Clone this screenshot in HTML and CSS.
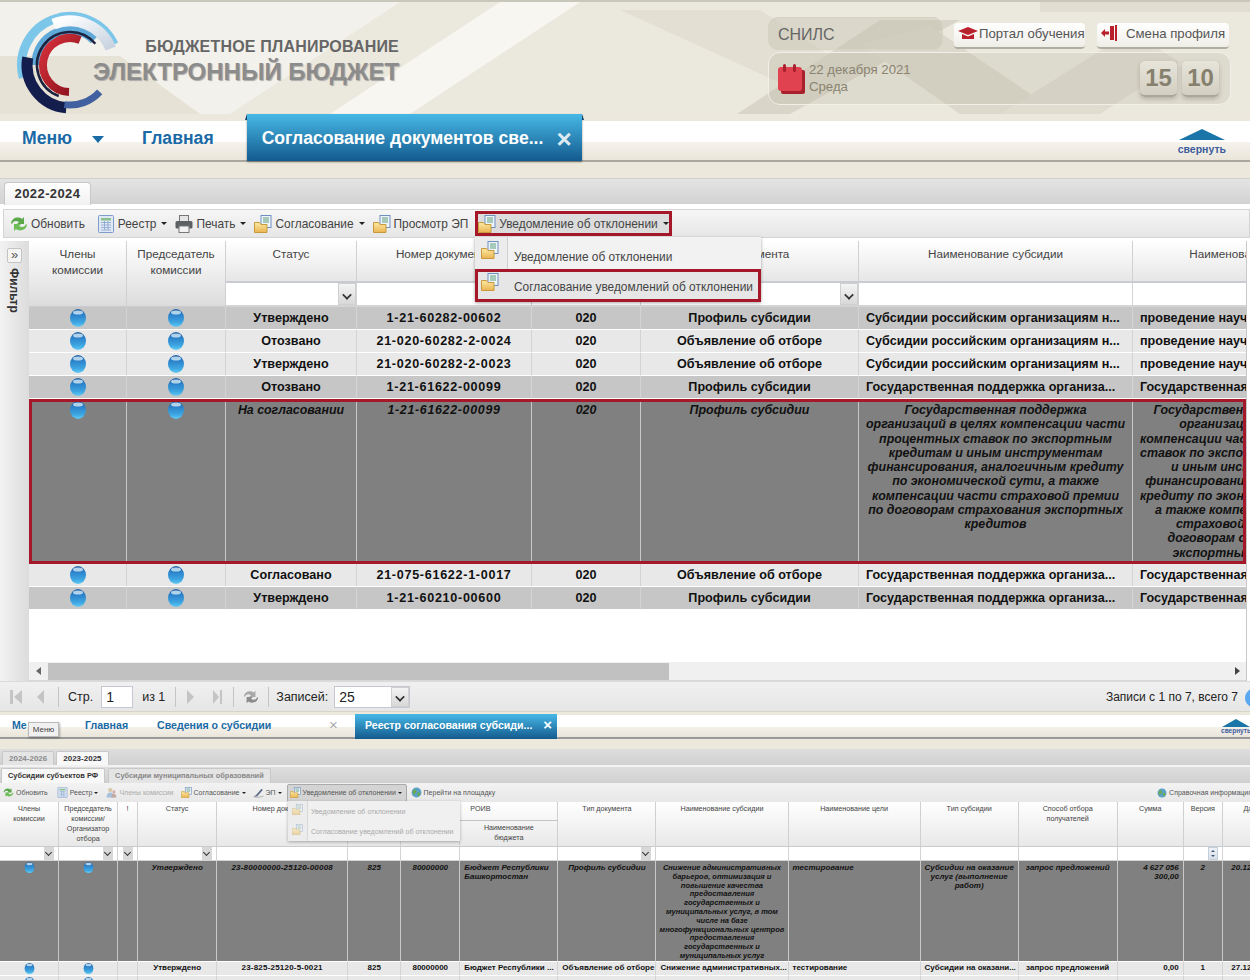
FILE: index.html
```html
<!doctype html>
<html lang="ru">
  <head>
    <meta charset="UTF-8" />
    <title>Электронный бюджет</title>
    <link rel="stylesheet" href="styles.css">
  </head>
  <body>
    <svg class="sprite" width="0" height="0">
      <defs>
        <linearGradient id="ballFill" x1="0" y1="0" x2="0" y2="1">
          <stop offset="0" stop-color="#1d5c9f" />
          <stop offset="0.35" stop-color="#2c84cc" />
          <stop offset="0.75" stop-color="#3ea6e2" />
          <stop offset="1" stop-color="#62cbf3" />
        </linearGradient>
        <linearGradient id="folderFill" x1="0" y1="0" x2="0" y2="1">
          <stop offset="0" stop-color="#fde9a6" />
          <stop offset="1" stop-color="#e9b450" />
        </linearGradient>
        <linearGradient id="redFill" x1="0" y1="0" x2="1" y2="1">
          <stop offset="0" stop-color="#d8323c" />
          <stop offset="1" stop-color="#86101a" />
        </linearGradient>
        <linearGradient id="whiteArc" x1="0" y1="0" x2="1" y2="1">
          <stop offset="0" stop-color="#ffffff" />
          <stop offset="1" stop-color="#c6d2e0" />
        </linearGradient>
        <symbol id="ball" viewBox="0 0 18 18">
          <ellipse cx="9" cy="9" rx="8" ry="9" fill="url(#ballFill)" />
          <ellipse cx="9" cy="3.4" rx="5" ry="2" fill="#dff1fb" opacity="0.75" />
        </symbol>
        <symbol id="docfolder" viewBox="0 0 18 18">
          <rect x="7" y="0.5" width="10" height="12" fill="#eef4fb" stroke="#6f8fbf" />
          <path d="M9 3h6M9 5h6M9 7h6" stroke="#5f9f7a" />
          <path d="M0.5 7.5h5l1.5 2h6v8h-12.500z" fill="url(#folderFill)" stroke="#c79a3c" />
        </symbol>
        <symbol id="refresh" viewBox="0 0 18 18">
          <path d="M1 8c1-5 7-7 11-4l2-2v7h-7l2-2c-3-2-6-1-7 2z" fill="#5aa84a" />
          <path d="M17 10c-1 5-7 7-11 4l-2 2v-7h7l-2 2c3 2 6 1 7-2z" fill="#6cbc58" />
        </symbol>
        <symbol id="refresh-off" viewBox="0 0 18 18">
          <path d="M1 8c1-5 7-7 11-4l2-2v7h-7l2-2c-3-2-6-1-7 2z" fill="#a8a8a8" />
          <path d="M17 10c-1 5-7 7-11 4l-2 2v-7h7l-2 2c3 2 6 1 7-2z" fill="#8c8c8c" />
        </symbol>
        <symbol id="sheet" viewBox="0 0 18 18">
          <rect x="1.500" y="0.500" width="15" height="17" rx="1" fill="#dfe9f6" stroke="#7e9cc8" />
          <rect x="4" y="3" width="10" height="2.500" fill="#8cc08c" />
          <path d="M4 7.500h10M4 10h10M4 12.500h10M4 15h10M7.500 6v9M11 6v9" stroke="#7e9cc8" stroke-width="0.700" fill="none" />
        </symbol>
        <symbol id="printer" viewBox="0 0 18 18">
          <rect x="4.500" y="0.500" width="9" height="6" fill="#e6e6e6" stroke="#777" />
          <rect x="0.500" y="6" width="17" height="7.500" rx="1.500" fill="#5c6064" />
          <rect x="4" y="11" width="10" height="6.500" fill="#f2f2f2" stroke="#777" />
        </symbol>
        <symbol id="globe" viewBox="0 0 18 18">
          <circle cx="9" cy="9" r="8" fill="#5aa0c8" />
          <path d="M4 5c3-2 5 0 5 2s-3 3-4 6c-2-2-3-5-1-8zM11 9c2-1 4 0 4 2s-2 4-3 4-2-4-1-6z" fill="#6cab4c" />
        </symbol>
        <symbol id="people" viewBox="0 0 18 18">
          <circle cx="7" cy="5" r="3.500" fill="#d8c8a8" />
          <path d="M1 17c0-6 3-8 6-8s6 2 6 8z" fill="#a8c0dc" />
          <circle cx="13" cy="8" r="2.500" fill="#d8a8a0" />
          <path d="M9 17c0-4 2-6 4-6s4 2 4 6z" fill="#c0a8a0" />
        </symbol>
        <symbol id="pen" viewBox="0 0 18 18">
          <path d="M1 16l4-3 9-10 2 2-9 10z" fill="#5a6a8a" />
          <path d="M1 16c4 1 10 1 16-1" stroke="#8a8a8a" fill="none" />
        </symbol>
      </defs>
    </svg>

    <div class="screen screen-top">
      <header class="head">
        <svg class="head-bg" width="1250" height="112" viewBox="0 0 1250 112">
          <rect width="1250" height="112" fill="#ebe8de" />
          <path d="M0 0H400L230 112H0z" fill="#f3f1eb" />
          <path d="M0 54H120L200 112H0z" fill="#e6e2d5" />
          <path d="M330 112L500 0H580L410 112z" fill="#f7f6f1" />
          <path d="M620 8H760L840 60 800 90z" fill="#e3e0d3" />
          <path d="M737 112L880 18 960 18 790 112z" fill="#d9d5c8" />
          <path d="M860 42L960 112H1060L930 24z" fill="#dcd8cb" />
          <path d="M1000 112L1130 30 1180 60 1100 112z" fill="#e0dcd0" />
          <path d="M1040 0H1250V10H1040z" fill="#e1ded1" />
        </svg>
        <div class="brand">
          <svg class="logo" width="115" height="108" viewBox="0 0 115 108">
            <path d="M11.200 67.600A48.500 48.500 0 0 1 102 34.500" fill="none" stroke="#7cc6ea" stroke-width="9" />
            <path d="M24 55A34 34 0 0 1 82 30" fill="none" stroke="#5fa9d8" stroke-width="9" />
            <path d="M41.500 14.200A44 44 0 0 1 98.800 38.500" fill="none" stroke="url(#whiteArc)" stroke-width="11" />
            <path d="M15.700 47.500A43 43 0 0 0 54.300 97.800" fill="none" stroke="#141e4e" stroke-width="11" />
            <path d="M52.400 94.600A40 40 0 0 0 87.700 81.800" fill="none" stroke="#41609f" stroke-width="7" />
            <path d="M83.300 33.800A33 33 0 1 0 46.700 86" fill="none" stroke="#1b2340" stroke-width="2.500" />
            <path d="M68.100 30A27 27 0 1 0 57 82" fill="none" stroke="url(#redFill)" stroke-width="8" />
          </svg>
          <div class="brand-text">
            <div class="brand-small">БЮДЖЕТНОЕ ПЛАНИРОВАНИЕ</div>
            <div class="brand-big">ЭЛЕКТРОННЫЙ БЮДЖЕТ</div>
          </div>
        </div>
        <div class="user">
          <div class="user-top">
            <div class="snils">СНИЛС</div>
            <div class="user-btn btn-portal">
              <svg width="22" height="14" viewBox="0 0 22 14"><path d="M11 1L21 5 11 9 1 5z" fill="#b8202c" /><path d="M5 8v5h12V8l-6 2.500z" fill="#b8202c" /></svg>
              Портал обучения
            </div>
            <div class="user-btn btn-profile">
              <svg width="16" height="16" viewBox="0 0 16 16"><path d="M9 1h4v14H9zM14 0h2v16h-2z" fill="#b8202c" /><path d="M0 8l4-4v2.500h4v3H4V12z" fill="#b8202c" /></svg>
              Смена профиля
            </div>
          </div>
          <div class="datebox">
            <svg class="cal" width="28" height="30" viewBox="0 0 28 30">
              <rect x="4" y="6" width="24" height="24" rx="2" fill="#a8202c" />
              <rect x="1" y="3" width="24" height="24" rx="3" fill="#e0434f" />
              <rect x="6" y="0" width="3" height="8" rx="1.500" fill="#a8202c" />
              <rect x="16" y="0" width="3" height="8" rx="1.500" fill="#a8202c" />
            </svg>
            <div class="date-text">
              <div>22 декабря 2021</div>
              <div>Среда</div>
            </div>
            <div class="clock">
              <span class="digit">15</span>
              <span class="digit">10</span>
            </div>
          </div>
        </div>
      </header>

      <nav class="nav">
        <span class="nav-link">Меню</span>
        <span class="nav-caret"></span>
        <span class="nav-link nav-main">Главная</span>
        <div class="nav-tab">
          <span>Согласование документов све...</span>
          <span class="tab-x">×</span>
        </div>
        <div class="collapse">
          <span class="collapse-tri"></span>
          <span>свернуть</span>
        </div>
      </nav>
      <div class="strip"></div>

      <div class="tabbar">
        <div class="year-tab">2022-2024</div>
      </div>

      <div class="toolbar">
        <div class="tool t-refresh"><svg width="18" height="18"><use href="#refresh" /></svg>Обновить</div>
        <div class="tool t-reg"><svg width="18" height="18"><use href="#sheet" /></svg>Реестр<i class="caret"></i></div>
        <div class="tool t-next"><svg width="18" height="18"><use href="#printer" /></svg>Печать<i class="caret"></i></div>
        <div class="tool t-next"><svg width="18" height="18"><use href="#docfolder" /></svg>Согласование<i class="caret"></i></div>
        <div class="tool t-next"><svg width="18" height="18"><use href="#docfolder" /></svg>Просмотр ЭП</div>
        <div class="tool tool-marked"><svg width="18" height="18"><use href="#docfolder" /></svg>Уведомление об отклонении<i class="caret"></i></div>
      </div>

      <div class="menu">
        <div class="menu-item"><svg width="18" height="18"><use href="#docfolder" /></svg><span>Уведомление об отклонении</span></div>
        <div class="menu-item menu-marked"><svg width="18" height="18"><use href="#docfolder" /></svg><span>Согласование уведомлений об отклонении</span></div>
      </div>

      <div class="work">
        <aside class="side">
          <div class="side-btn">»</div>
          <div class="side-label">Фильтр</div>
        </aside>
        <div class="work-main">
          <div class="grid">
            <table class="table table-top">
              <colgroup>
                <col class="c98" /><col class="c99" /><col class="c131" /><col class="c175" />
                <col class="c109" /><col class="c218" /><col class="c274" /><col class="c224" />
              </colgroup>
              <thead>
                <tr class="head-row">
                  <th rowspan="2" class="th-tall">Члены<br />комиссии</th>
                  <th rowspan="2" class="th-tall">Председатель<br />комиссии</th>
                  <th>Статус</th>
                  <th>Номер документа</th>
                  <th></th>
                  <th>Тип документа</th>
                  <th>Наименование субсидии</th>
                  <th>Наименование цели</th>
                </tr>
                <tr class="filter-row">
                  <td class="has-trigger"><i class="trigger"></i></td>
                  <td></td>
                  <td></td>
                  <td class="has-trigger"><i class="trigger"></i></td>
                  <td></td>
                  <td></td>
                </tr>
              </thead>
              <tbody>
                <tr class="r-grey">
                  <td><svg class="ball"><use href="#ball" /></svg></td><td><svg class="ball"><use href="#ball" /></svg></td>
                  <td>Утверждено</td><td class="num">1-21-60282-00602</td><td>020</td><td>Профиль субсидии</td>
                  <td class="left">Субсидии российским организациям н...</td><td class="left">проведение научно-исследовательских</td>
                </tr>
                <tr class="r-light">
                  <td><svg class="ball"><use href="#ball" /></svg></td><td><svg class="ball"><use href="#ball" /></svg></td>
                  <td>Отозвано</td><td class="num">21-020-60282-2-0024</td><td>020</td><td>Объявление об отборе</td>
                  <td class="left">Субсидии российским организациям н...</td><td class="left">проведение научно-исследовательских</td>
                </tr>
                <tr class="r-light">
                  <td><svg class="ball"><use href="#ball" /></svg></td><td><svg class="ball"><use href="#ball" /></svg></td>
                  <td>Утверждено</td><td class="num">21-020-60282-2-0023</td><td>020</td><td>Объявление об отборе</td>
                  <td class="left">Субсидии российским организациям н...</td><td class="left">проведение научно-исследовательских</td>
                </tr>
                <tr class="r-grey">
                  <td><svg class="ball"><use href="#ball" /></svg></td><td><svg class="ball"><use href="#ball" /></svg></td>
                  <td>Отозвано</td><td class="num">1-21-61622-00099</td><td>020</td><td>Профиль субсидии</td>
                  <td class="left">Государственная поддержка организа...</td><td class="left">Государственная поддержка</td>
                </tr>
                <tr class="r-sel r-sel-top">
                  <td><svg class="ball"><use href="#ball" /></svg></td><td><svg class="ball"><use href="#ball" /></svg></td>
                  <td>На согласовании</td><td class="num">1-21-61622-00099</td><td>020</td><td>Профиль субсидии</td>
                  <td>Государственная поддержка<br />организаций в целях компенсации части<br />процентных ставок по экспортным<br />кредитам и иным инструментам<br />финансирования, аналогичным кредиту<br />по экономической сути, а также<br />компенсации части страховой премии<br />по договорам страхования экспортных<br />кредитов</td>
                  <td>Государственная поддержка<br />организаций в целях<br />компенсации части процентных<br />ставок по экспортным кредитам<br />и иным инструментам<br />финансирования, аналогичным<br />кредиту по экономической сути,<br />а также компенсации части<br />страховой премии по<br />договорам страхования<br />экспортных кредитов</td>
                </tr>
                <tr class="r-light">
                  <td><svg class="ball"><use href="#ball" /></svg></td><td><svg class="ball"><use href="#ball" /></svg></td>
                  <td>Согласовано</td><td class="num">21-075-61622-1-0017</td><td>020</td><td>Объявление об отборе</td>
                  <td class="left">Государственная поддержка организа...</td><td class="left">Государственная поддержка</td>
                </tr>
                <tr class="r-grey">
                  <td><svg class="ball"><use href="#ball" /></svg></td><td><svg class="ball"><use href="#ball" /></svg></td>
                  <td>Утверждено</td><td class="num">1-21-60210-00600</td><td>020</td><td>Профиль субсидии</td>
                  <td class="left">Государственная поддержка организа...</td><td class="left">Государственная поддержка</td>
                </tr>
              </tbody>
            </table>
            <div class="row-mark"></div>
          </div>
          <div class="scrollbar">
            <i class="arrow-l"></i>
            <div class="thumb"></div>
            <i class="arrow-r"></i>
          </div>
        </div>
      </div>

      <div class="pager">
        <svg class="pg-icon" width="14" height="16" viewBox="0 0 14 16"><path d="M1 1h3v14H1zM13 1v14L5 8z" fill="#c4c4c4" /></svg>
        <svg class="pg-icon pg-prev" width="9" height="16" viewBox="0 0 9 16"><path d="M8 1v14L1 8z" fill="#c4c4c4" /></svg>
        <i class="pg-sep pg-sep-first"></i>
        <span class="pg-text">Стр.</span>
        <span class="pg-input">1</span>
        <span class="pg-text">из 1</span>
        <i class="pg-sep"></i>
        <svg class="pg-icon pg-next" width="9" height="16" viewBox="0 0 9 16"><path d="M1 1v14l7-7z" fill="#c4c4c4" /></svg>
        <svg class="pg-icon pg-last" width="11" height="16" viewBox="0 0 11 16"><path d="M1 1v14l6-7zM8 1h2v14H8z" fill="#c4c4c4" /></svg>
        <i class="pg-sep"></i>
        <svg class="pg-icon" width="16" height="18"><use href="#refresh-off" /></svg>
        <i class="pg-sep pg-sep-tight"></i>
        <span class="pg-text">Записей:</span>
        <span class="pg-combo"><span class="pg-val">25</span><i class="trigger"></i></span>
        <span class="pg-total">Записи с 1 по 7, всего 7</span>
        <i class="pg-dot"></i>
      </div>
    </div>

    <div class="screen screen-bottom">
      <div class="nav2-top"></div>
      <nav class="nav2">
        <span class="nav2-link n-menu">Ме</span>
        <span class="nav2-link n-main">Главная</span>
        <span class="nav2-link n-info">Сведения о субсидии</span>
        <span class="n-x">×</span>
        <div class="nav2-tab">
          <span>Реестр согласования субсиди...</span>
          <span class="tab2-x">×</span>
        </div>
        <div class="collapse2">
          <span class="collapse2-tri"></span>
          <span>свернуть</span>
        </div>
      </nav>
      <div class="tip">Меню</div>
      <div class="strip2"></div>

      <div class="tabs2 tabs-years">
        <div class="tab2">2024-2026</div>
        <div class="tab2 tab2-on">2023-2025</div>
      </div>
      <div class="tabs2 tabs-kinds">
        <div class="tab2 tab2-on">Субсидии субъектов РФ</div>
        <div class="tab2">Субсидии муниципальных образований</div>
      </div>

      <div class="toolbar2">
        <div class="tool2"><svg width="11" height="11"><use href="#refresh" /></svg>Обновить</div>
        <div class="tool2 m-reg"><svg width="11" height="11"><use href="#sheet" /></svg>Реестр<i class="caret2"></i></div>
        <div class="tool2 tool2-off m-mem"><svg width="11" height="11"><use href="#people" /></svg>Члены комиссии</div>
        <div class="tool2 m-agree"><svg width="11" height="11"><use href="#docfolder" /></svg>Согласование<i class="caret2"></i></div>
        <div class="tool2 m-ep"><svg width="11" height="11"><use href="#pen" /></svg>ЭП<i class="caret2"></i></div>
        <div class="tool2 tool2-open"><svg width="11" height="11"><use href="#docfolder" /></svg>Уведомление об отклонении<i class="caret2"></i></div>
        <div class="tool2 m-go"><svg width="11" height="11"><use href="#globe" /></svg>Перейти на площадку</div>
        <div class="tool2 tool2-right"><svg width="10" height="10"><use href="#globe" /></svg>Справочная информация</div>
      </div>

      <div class="menu2">
        <div class="menu2-item"><svg width="11" height="11"><use href="#docfolder" /></svg><span>Уведомление об отклонении</span></div>
        <div class="menu2-item"><svg width="11" height="11"><use href="#docfolder" /></svg><span>Согласование уведомлений об отклонении</span></div>
      </div>

      <table class="table table-bottom">
        <colgroup>
          <col class="b59" /><col class="b59" /><col class="b20" /><col class="b79" /><col class="b131" /><col class="b53" />
          <col class="b59" /><col class="b98" /><col class="b98" /><col class="b132" /><col class="b132" /><col class="b98" />
          <col class="b99" /><col class="b66" /><col class="b39" /><col class="b58" />
        </colgroup>
        <thead>
          <tr class="head2-row">
            <th>Члены<br />комиссии</th>
            <th>Председатель<br />комиссии/<br />Организатор<br />отбора</th>
            <th>!</th>
            <th>Статус</th>
            <th>Номер документа</th>
            <th></th>
            <th></th>
            <th class="th-split"><div class="th-up">РОИВ</div><div class="th-down">Наименование<br />бюджета</div></th>
            <th>Тип документа</th>
            <th>Наименование субсидии</th>
            <th>Наименование цели</th>
            <th>Тип субсидии</th>
            <th>Способ отбора<br />получателей</th>
            <th>Сумма</th>
            <th>Версия</th>
            <th>Дата</th>
          </tr>
          <tr class="filter2-row">
            <td class="has-trigger"><i class="trigger2"></i></td>
            <td class="has-trigger"><i class="trigger2"></i></td>
            <td class="has-trigger"><i class="trigger2"></i></td>
            <td class="has-trigger"><i class="trigger2"></i></td>
            <td></td><td></td><td></td><td></td>
            <td class="has-trigger"><i class="trigger2"></i></td>
            <td></td><td></td><td></td><td></td><td></td>
            <td class="has-trigger"><i class="spin"></i></td>
            <td></td>
          </tr>
        </thead>
        <tbody>
          <tr class="r-sel r2-sel">
            <td><svg class="ball2"><use href="#ball" /></svg></td><td><svg class="ball2"><use href="#ball" /></svg></td><td></td>
            <td>Утверждено</td><td class="num2">23-80000000-25120-00008</td><td>825</td><td>80000000</td>
            <td class="left">Бюджет Республики<br />Башкортостан</td>
            <td>Профиль субсидии</td>
            <td class="long">Снижение административных<br />барьеров, оптимизация и<br />повышение качества<br />предоставления<br />государственных и<br />муниципальных услуг, в том<br />числе на базе<br />многофункциональных центров<br />предоставления<br />государственных и<br />муниципальных услуг</td>
            <td class="left">тестирование</td>
            <td>Субсидии на оказание<br />услуг (выполнение<br />работ)</td>
            <td>запрос предложений</td>
            <td class="right">4 627 056<br />300,00</td>
            <td>2</td>
            <td>20.12.2022</td>
          </tr>
          <tr class="r2-light">
            <td><svg class="ball2"><use href="#ball" /></svg></td><td><svg class="ball2"><use href="#ball" /></svg></td><td></td>
            <td>Утверждено</td><td class="num2">23-825-25120-5-0021</td><td>825</td><td>80000000</td>
            <td class="left">Бюджет Республики ...</td>
            <td>Объявление об отборе</td>
            <td class="left">Снижение административных...</td>
            <td class="left">тестирование</td>
            <td class="left">Субсидии на оказани...</td>
            <td>запрос предложений</td>
            <td class="right">0,00</td>
            <td>1</td>
            <td>27.12.2022</td>
          </tr>
          <tr class="r2-light">
            <td><svg class="ball2"><use href="#ball" /></svg></td><td><svg class="ball2"><use href="#ball" /></svg></td><td></td>
            <td></td><td></td><td></td><td></td><td></td><td></td><td></td><td></td><td></td><td></td><td></td><td></td><td></td>
          </tr>
        </tbody>
      </table>
    </div>
  </body>
</html>
```

FILE: styles.css
```css
* {
  box-sizing: border-box;
}

html,
body {
  margin: 0;
  padding: 0;
}

body {
  width: 1250px;
  height: 980px;
  overflow: hidden;
  font-family: "Liberation Sans", Arial, sans-serif;
  background: #fff;
}

.sprite {
  position: absolute;
}

.screen {
  position: relative;
  overflow: hidden;
}

.screen-top {
  height: 712px;
}

.screen-bottom {
  height: 268px;
}

/* шапка */
.head {
  position: relative;
  height: 121px;
  border-top: 2px solid #c9c7bc;
  background: #ece8dd;
  display: flex;
  justify-content: space-between;
}

.head-bg {
  position: absolute;
  left: 0;
  top: 0;
}

.brand {
  position: relative;
  display: flex;
  padding: 8px 0 0 12px;
}

.brand-text {
  margin-left: -34px;
  padding-top: 27px;
  text-align: right;
  width: 306px;
  font-weight: bold;
  white-space: nowrap;
}

.brand-small {
  font-size: 16px;
  line-height: 20px;
  letter-spacing: 0.2px;
  color: #666;
}

.brand-big {
  font-size: 24px;
  line-height: 30px;
  color: #8c8c8c;
  text-shadow: 1px 1px 1px #aaa;
}

.user {
  position: relative;
  width: 463px;
  margin-right: 19px;
  padding-top: 15px;
}

.user-top {
  display: flex;
  align-items: flex-start;
  height: 35px;
}

.snils {
  width: 175px;
  height: 33px;
  padding: 8px 9px;
  font-size: 16px;
  line-height: 18px;
  color: #666;
  background: rgba(190, 186, 170, 0.35);
  border: 1px solid #d6d2c4;
  border-radius: 10px;
}

.user-btn {
  display: flex;
  align-items: center;
  height: 26px;
  margin-top: 6px;
  padding-bottom: 4px;
  font-size: 13.200px;
  color: #555;
  white-space: nowrap;
  background: linear-gradient(#fff, #f0eee8);
  border-bottom: 2px solid #b0aea2;
  border-radius: 4px;
}

.user-btn svg {
  flex: none;
}

.btn-portal {
  width: 131px;
  margin-left: 11px;
  padding-left: 3px;
}

.btn-profile {
  width: 132px;
  margin-left: 12px;
  padding-left: 4px;
  gap: 9px;
}

.datebox {
  display: flex;
  align-items: flex-start;
  height: 53px;
  padding: 8px 10px 0 8px;
  background: rgba(190, 186, 170, 0.3);
  border: 1px solid #f1efe8;
  border-radius: 12px;
}

.date-text {
  margin-left: 4px;
  font-size: 13.200px;
  line-height: 17px;
  color: #8a8470;
}

.cal {
  flex: none;
  margin-top: 3px;
}

.clock {
  margin-left: auto;
  display: flex;
  gap: 5px;
  margin-right: 1px;
}

.digit {
  width: 37px;
  height: 36px;
  font-size: 24px;
  line-height: 34px;
  font-weight: bold;
  text-align: center;
  color: #86816f;
  background: linear-gradient(#e7e4da, #d3cfc2);
  border-bottom: 2px solid #aaa797;
  border-radius: 5px;
  box-shadow: 0 2px 4px rgba(120, 116, 100, 0.4);
}

/* меню вкладок */
.nav {
  display: flex;
  height: 41px;
  padding-left: 22px;
  font-size: 17.600px;
  font-weight: bold;
  background: linear-gradient(#fff 0 21px, #f6f3ed 21px, #e9e5da 39px, #a9a79e 39px 41px);
}

.nav-link {
  padding-top: 8px;
  line-height: 18px;
  color: #1a6aa6;
}

.nav-caret {
  width: 0;
  height: 0;
  margin: 15px 0 0 20px;
  border-left: 6px solid transparent;
  border-right: 6px solid transparent;
  border-top: 7px solid #1a6aa6;
}

.nav-main {
  margin-left: 38px;
}

.nav-tab {
  position: relative;
  display: flex;
  justify-content: space-between;
  width: 335px;
  height: 47px;
  margin: -7px 0 0 33px;
  padding: 15px 10px 0 15px;
  line-height: 18px;
  color: #fff;
  background: linear-gradient(#46b8e6, #145a8e);
  box-shadow: 0 1px 2px rgba(0, 0, 0, 0.4);
}

.nav-tab::before,
.nav-tab::after {
  content: "";
  position: absolute;
  top: 0;
  border-bottom: 6px solid #14406a;
}

.nav-tab::before {
  left: -2px;
  border-left: 2px solid transparent;
}

.nav-tab::after {
  right: -2px;
  border-right: 2px solid transparent;
}

.tab-x {
  font-size: 26px;
  color: #dfeaf3;
  line-height: 20px;
}

.collapse {
  margin-left: auto;
  margin-right: 24px;
  padding-top: 8px;
  display: flex;
  flex-direction: column;
  align-items: center;
  font-size: 10.500px;
  line-height: 12px;
  color: #3c5c9c;
}

.collapse-tri {
  width: 0;
  height: 0;
  margin-bottom: 3px;
  border-left: 23px solid transparent;
  border-right: 23px solid transparent;
  border-bottom: 11px solid #1a75a8;
}

.strip {
  height: 16px;
  background: #ece8dc;
}

/* вкладки периодов */
.tabbar {
  height: 26px;
  padding: 3px 0 0 4px;
  background: linear-gradient(#e4e4e4, #d2d2d2);
  border-top: 1px solid #d0d0d0;
}

.year-tab {
  width: 87px;
  height: 23px;
  font-size: 13px;
  font-weight: bold;
  line-height: 22px;
  letter-spacing: 0.4px;
  text-align: center;
  color: #333;
  background: linear-gradient(#fff, #f0f0f0);
  border: 1px solid #c8c8c8;
  border-bottom: none;
  border-radius: 4px 4px 0 0;
}

.toolbar {
  display: flex;
  align-items: center;
  height: 29px;
  margin: 5px 0 3px 3px;
  padding-left: 6px;
  font-size: 11.900px;
  color: #444;
  background: linear-gradient(#f6f6f6, #e6e6e6);
  border: 1px solid #d4d4d4;
}

.tool {
  display: flex;
  align-items: center;
  gap: 3px;
  white-space: nowrap;
}

.t-reg {
  margin-left: 12px;
}

.t-next {
  margin-left: 8px;
}

.tool-marked {
  height: 25px;
  margin-left: 7px;
  background: #dcdcdc;
  border: 3px solid #a5182a;
}

.caret {
  width: 0;
  height: 0;
  margin-left: 2px;
  border-left: 3px solid transparent;
  border-right: 3px solid transparent;
  border-top: 3px solid #222;
}

.menu {
  position: absolute;
  left: 475px;
  top: 237px;
  width: 286px;
  height: 65px;
  z-index: 5;
  font-size: 11.900px;
  color: #444;
  background: linear-gradient(90deg, #ececec 0 32px, #d0d0d0 32px 33px, #f2f2f2 33px);
  box-shadow: 0 1px 3px rgba(0, 0, 0, 0.35);
}

.menu-item {
  position: relative;
  display: flex;
  height: 32px;
  padding: 4px 0 0 6px;
}

.menu-item span {
  margin: 9px 0 0 15px;
  white-space: nowrap;
}

.menu-marked {
  height: 33px;
  padding: 1px 0 0 3px;
  border: 3px solid #a5182a;
  background: #e6e6e6;
}

.menu-marked span {
  margin: 7px 0 0 15px;
}

/* таблица */
.work {
  display: flex;
  height: 440px;
}

.side {
  flex: none;
  width: 29px;
  padding: 7px 0 0 7px;
  background: linear-gradient(90deg, #f2f2f2, #dcdcdc);
}

.side-btn {
  width: 15px;
  height: 15px;
  font-size: 13px;
  line-height: 12px;
  text-align: center;
  color: #555;
  background: #f6f6f6;
  border: 1px solid #c4c4c4;
  border-radius: 2px;
}

.side-label {
  margin-top: 5px;
  writing-mode: vertical-rl;
  font-size: 12px;
  font-weight: bold;
  color: #333;
}

.work-main {
  flex: none;
  width: 1218px;
  border-right: 1px solid #c8c8c8;
}

.grid {
  position: relative;
  height: 421px;
  overflow: hidden;
}

.table {
  table-layout: fixed;
  border-collapse: separate;
  border-spacing: 0;
  color: #111;
}

.table-top {
  width: 1328px;
  font-size: 12.600px;
  font-weight: bold;
}

.c98 { width: 98px; }
.c99 { width: 99px; }
.c131 { width: 131px; }
.c175 { width: 175px; }
.c109 { width: 109px; }
.c218 { width: 218px; }
.c274 { width: 274px; }
.c224 { width: 224px; }

.table th {
  font-weight: normal;
  vertical-align: top;
  color: #444;
  border-right: 1px solid #d0d0d0;
}

.table td {
  padding: 0 7px;
  text-align: center;
  white-space: nowrap;
  overflow: hidden;
  border-right: 1px solid #d4d4d4;
  border-bottom: 1px solid #fff;
}

.table td.left {
  text-align: left;
}

.table td.right {
  text-align: right;
}

.table td.num {
  letter-spacing: 0.7px;
}

.table td.num2 {
  letter-spacing: 0.2px;
}

.head-row th {
  height: 42px;
  padding: 5px 0 0;
  font-size: 11.700px;
  line-height: 16px;
  background: linear-gradient(#fff, #e6e6e6);
  border-bottom: 2px solid #c8ccd0;
}

.head-row .th-tall {
  background: linear-gradient(#fff, #dcdcdc);
  border-bottom: 1px solid #c8ccd0;
}

.filter-row td {
  position: relative;
  height: 24px;
  padding: 0;
  background: #fff;
  border-bottom: 2px solid #d4d4d4;
}

.trigger {
  display: block;
  width: 18px;
  height: 22px;
  background: linear-gradient(#f4f4f4, #d8d8d8);
  border: 1px solid #d0d0d0;
  position: relative;
}

.trigger::after {
  content: "";
  position: absolute;
  left: 4px;
  top: 7px;
  width: 6px;
  height: 6px;
  border-right: 2px solid #333;
  border-bottom: 2px solid #333;
  transform: rotate(45deg) scale(0.85);
}

.has-trigger .trigger {
  margin-left: auto;
}

.r-grey td {
  height: 23px;
  background: #c6c6c6;
}

.r-light td {
  height: 23px;
  background: #e8e8e8;
}

.r-sel td {
  background: #808080;
  font-style: italic;
  vertical-align: top;
  border-right-color: #c8c8c8;
}

.r-sel-top td {
  height: 165px;
  padding-top: 4px;
  font-size: 12.400px;
  line-height: 14.250px;
}

.ball {
  display: block;
  width: 18px;
  height: 18px;
  margin: 0 auto;
}

.r-sel-top .ball {
  margin-top: -2px;
}

.row-mark {
  position: absolute;
  left: 0;
  top: 158px;
  width: 1217px;
  height: 165px;
  border: 3px solid #a5182a;
}

.scrollbar {
  display: flex;
  align-items: center;
  height: 19px;
  padding: 0 6px 0 7px;
  background: #f0f0f0;
  border-bottom: 1px solid #d8d8d8;
}

.arrow-l {
  width: 0;
  height: 0;
  border-top: 4px solid transparent;
  border-bottom: 4px solid transparent;
  border-right: 5px solid #666;
}

.thumb {
  width: 621px;
  height: 17px;
  margin-left: 7px;
  background: #c1c1c1;
}

.arrow-r {
  width: 0;
  height: 0;
  margin-left: auto;
  border-top: 4px solid transparent;
  border-bottom: 4px solid transparent;
  border-left: 5px solid #444;
}

/* пейджер */
.pager {
  position: relative;
  display: flex;
  align-items: center;
  height: 31px;
  padding-left: 9px;
  font-size: 12.500px;
  color: #222;
  background: linear-gradient(#f0f0f0, #e6e6e6);
  border-top: 1px solid #dadada;
  border-bottom: 1px solid #d8d4c8;
}

.pg-icon {
  flex: none;
}

.pg-prev {
  margin-left: 13px;
}

.pg-next {
  margin-left: 1px;
}

.pg-last {
  margin-left: 17px;
}

.pg-sep {
  width: 1px;
  height: 20px;
  margin: 0 9px 0 10px;
  background: #c4c4c4;
}

.pg-sep-first {
  margin-left: 13px;
}

.pg-sep-tight {
  margin: 0 7px 0 9px;
}

.pg-text {
  white-space: nowrap;
}

.pg-input {
  width: 32px;
  height: 22px;
  margin: 0 9px 0 8px;
  padding-left: 4px;
  font-size: 14px;
  line-height: 20px;
  background: #fff;
  border: 1px solid #c4c8d0;
}

.pg-combo {
  display: flex;
  width: 76px;
  height: 22px;
  margin-left: 6px;
  font-size: 14px;
  line-height: 20px;
  background: #fff;
  border: 1px solid #c4c8d0;
}

.pg-val {
  flex: 1;
  padding-left: 4px;
}

.pg-combo .trigger {
  height: 20px;
}

.pg-combo .trigger::after {
  top: 5px;
}

.pg-total {
  margin-left: auto;
  margin-right: 12px;
  font-size: 12px;
}

.pg-dot {
  position: absolute;
  right: -17px;
  top: 6px;
  width: 22px;
  height: 20px;
  border-radius: 50%;
  background: #5aa8f0;
}

/* нижний экран */
.nav2-top {
  height: 3px;
  background: #ece8dc;
}

.nav2 {
  display: flex;
  height: 24px;
  font-size: 10.600px;
  font-weight: bold;
  background: linear-gradient(#fff 0 12px, #f4f1ea 12px, #e9e5da 22px, #999 22px 24px);
}

.nav2-link {
  padding-top: 4px;
  line-height: 12px;
  color: #1a6aa6;
}

.n-menu {
  margin-left: 12px;
  width: 73px;
}

.n-main {
  width: 72px;
}

.n-info {
  width: 172px;
}

.n-x {
  width: 26px;
  color: #aaa;
  font-size: 15px;
  line-height: 20px;
  font-weight: normal;
}

.nav2-tab {
  display: flex;
  justify-content: space-between;
  width: 202px;
  height: 25px;
  margin-top: -1px;
  padding: 5px 5px 0 10px;
  font-size: 10.600px;
  line-height: 12px;
  white-space: nowrap;
  color: #fff;
  background: linear-gradient(#46b8e6, #145a8e);
}

.tab2-x {
  font-size: 15px;
}

.collapse2 {
  margin-left: auto;
  display: flex;
  flex-direction: column;
  align-items: center;
  width: 28px;
  padding-top: 4px;
  font-size: 6.500px;
  line-height: 8px;
  white-space: nowrap;
  color: #3c5c9c;
}

.collapse2-tri {
  width: 0;
  height: 0;
  border-left: 14px solid transparent;
  border-right: 14px solid transparent;
  border-bottom: 8px solid #1a75a8;
}

.tip {
  position: absolute;
  left: 28px;
  top: 10px;
  width: 31px;
  height: 15px;
  font-size: 8px;
  line-height: 14px;
  text-align: center;
  color: #444;
  background: #f0f0f0;
  border: 1px solid #bbb;
  box-shadow: 1px 1px 2px rgba(0, 0, 0, 0.3);
}

.strip2 {
  height: 10px;
  background: #ece8dc;
}

.tabs2 {
  display: flex;
  padding-left: 2px;
  background: linear-gradient(#dedede, #d0d0d0);
  font-weight: bold;
  color: #888;
}

.tabs-years {
  gap: 2px;
  height: 18px;
  padding-top: 2px;
  font-size: 8px;
  border-bottom: 2px solid #f2f2f2;
}

.tabs-kinds {
  gap: 3px;
  height: 16px;
  padding-left: 1px;
  padding-top: 1px;
  font-size: 7.400px;
}

.tab2 {
  padding: 0 6px;
  line-height: 14px;
  background: #e4e4e4;
  border: 1px solid #c8c8c8;
  border-bottom: none;
  border-radius: 2px 2px 0 0;
}

.tab2-on {
  color: #333;
  background: #f8f8f8;
}

.toolbar2 {
  position: relative;
  display: flex;
  align-items: center;
  height: 19px;
  padding-left: 3px;
  font-size: 7px;
  color: #555;
  background: linear-gradient(#f2f2f2, #e8e8e8);
}

.tool2 {
  display: flex;
  align-items: center;
  gap: 2px;
  white-space: nowrap;
}

.tool2-off {
  color: #aaa;
}

.m-reg {
  margin-left: 9px;
}

.m-mem {
  margin-left: 8px;
}

.m-agree {
  margin-left: 7px;
}

.m-ep {
  margin-left: 7px;
}

.tool2-open {
  width: 120px;
  height: 18px;
  margin-left: 5px;
  padding: 0 2px;
  background: #d4d4d4;
  border: 1px solid #aaa;
  border-radius: 2px;
}

.m-go {
  margin-left: 4px;
}

.tool2-right {
  margin-left: auto;
  margin-right: -2px;
}

.caret2 {
  width: 0;
  height: 0;
  border-left: 2px solid transparent;
  border-right: 2px solid transparent;
  border-top: 2px solid #222;
}

.menu2 {
  position: absolute;
  left: 288px;
  top: 89px;
  width: 172px;
  height: 40px;
  z-index: 5;
  font-size: 7.100px;
  color: #aaa;
  background: linear-gradient(90deg, #ececec 0 19px, #d8d8d8 19px 20px, #f0f0f0 20px);
  box-shadow: 0 1px 3px rgba(0, 0, 0, 0.3);
}

.menu2-item {
  display: flex;
  height: 20px;
  padding: 3px 0 0 4px;
}

.menu2-item svg {
  opacity: 0.5;
}

.menu2-item span {
  margin: 4px 0 0 8px;
  white-space: nowrap;
}

.table-bottom {
  width: 1281px;
  font-size: 8px;
  font-weight: bold;
}

.b20 { width: 20px; }
.b39 { width: 39px; }
.b53 { width: 53px; }
.b58 { width: 58px; }
.b59 { width: 59px; }
.b66 { width: 66px; }
.b79 { width: 79px; }
.b98 { width: 98px; }
.b99 { width: 99px; }
.b131 { width: 131px; }
.b132 { width: 132px; }

.head2-row th {
  height: 45px;
  padding: 2px 0 0;
  font-size: 7.200px;
  line-height: 10px;
  background: linear-gradient(#fff, #e8e8e8);
  border-bottom: 1px solid #c8ccd0;
}

.head2-row .th-split {
  padding: 0;
}

.th-up {
  height: 19px;
  padding: 2px 0 0 10px;
  text-align: left;
  border-bottom: 1px solid #c4c4c4;
}

.th-down {
  padding-top: 2px;
}

.filter2-row td {
  height: 14px;
  padding: 0;
  background: #fff;
  border-bottom: 1px solid #d4d4d4;
}

.trigger2 {
  position: relative;
  display: block;
  width: 10px;
  height: 13px;
  margin-left: auto;
  background: #d8d8d8;
}

.trigger2::after {
  content: "";
  position: absolute;
  left: 2px;
  top: 3px;
  width: 4px;
  height: 4px;
  border-right: 1px solid #333;
  border-bottom: 1px solid #333;
  transform: rotate(45deg);
}

.spin {
  position: relative;
  display: block;
  width: 10px;
  height: 13px;
  margin-left: auto;
  background: linear-gradient(#eef2f6, #d8e0e8);
  border: 1px solid #c4d0dc;
}

.spin::before,
.spin::after {
  content: "";
  position: absolute;
  left: 2px;
  border-left: 2px solid transparent;
  border-right: 2px solid transparent;
}

.spin::before {
  top: 2px;
  border-bottom: 2px solid #445a7a;
}

.spin::after {
  bottom: 2px;
  border-top: 2px solid #445a7a;
}

.table-bottom td {
  padding: 0 4px;
}

.r2-sel td {
  height: 100px;
  padding-top: 3px;
  line-height: 8.800px;
}

.table-bottom td.long {
  padding: 3px 0 0;
  font-size: 7.500px;
}

.r2-sel .ball2 {
  margin-top: -2px;
}

.r2-light td {
  height: 14px;
  line-height: 12px;
  background: #e8e8e8;
}

.ball2 {
  display: block;
  width: 11px;
  height: 11px;
  margin: 0 auto;
}
```
